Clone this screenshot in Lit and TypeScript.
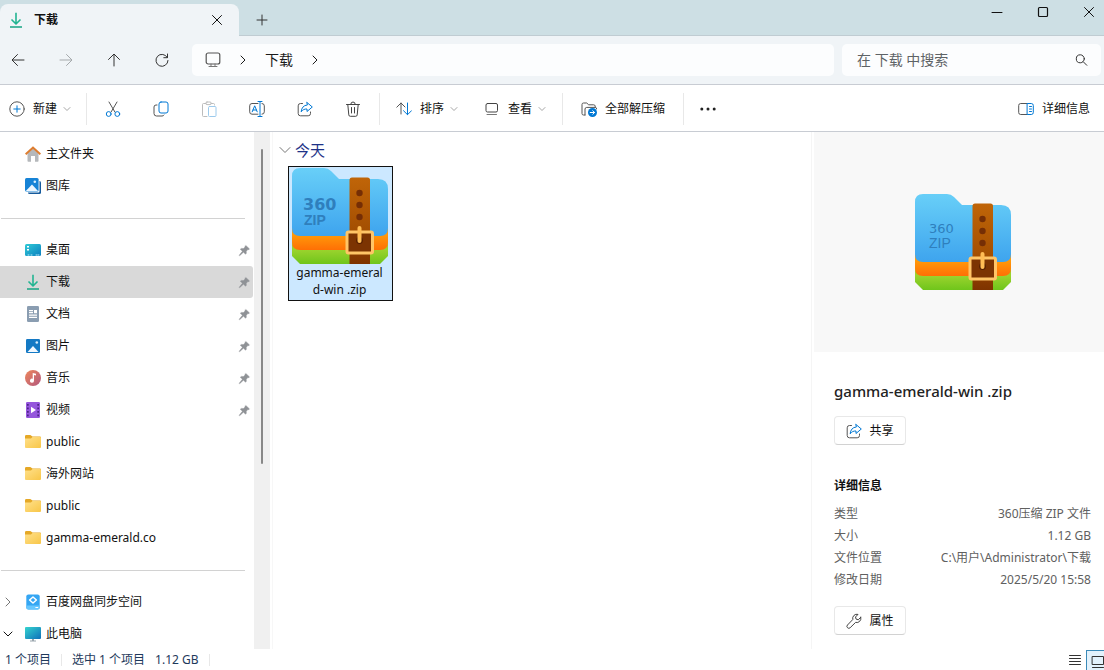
import { LitElement, html, svg, css, nothing, TemplateResult } from "lit";
import { customElement, property } from "lit/decorators.js";
import { classMap } from "lit/directives/class-map.js";

const glyph = (body: unknown, size = 16) =>
  html`<svg width=${size} height=${size} viewBox="0 0 16 16" fill="none" stroke="currentColor" stroke-linecap="round" stroke-linejoin="round" aria-hidden="true">${body}</svg>`;

const ICONS: Record<string, unknown> = {
  close: svg`<path d="M3.500 3.500l9 9M12.500 3.500l-9 9"/>`,
  plus: svg`<path d="M8 3v10M3 8h10"/>`,
  back: svg`<path d="M14 8H2.500M7.500 2.500L2 8l5.500 5.500"/>`,
  forward: svg`<path d="M2 8h11.500M8.500 2.500L14 8l-5.500 5.500"/>`,
  up: svg`<path d="M8 14V2.500M2.500 7.500L8 2l5.500 5.500"/>`,
  refresh: svg`<path d="M13.300 5.500A6 6 0 1 0 14 8.500M13.500 2v3.700H9.800"/>`,
  monitor: svg`<rect x="1.200" y="1" width="13.600" height="11" rx="2" stroke="#555" stroke-width="1.200"/><path d="M6 12v2.500M10 12v2.500M4 14.500h8" stroke="#777"/>`,
  chevronRight: svg`<path d="M6 4l4 4-4 4"/>`,
  chevronDown: svg`<path d="M4 6l4 4 4-4"/>`,
  collapse: svg`<path d="M3 5.500l5 5 5-5"/>`,
  search: svg`<circle cx="7.300" cy="6.800" r="4"/><path d="M10.300 9.800L13.800 13.300"/>`,
  create: svg`<circle cx="8" cy="8" r="7.200" stroke="#555"/><path d="M8 4.800v6.400M4.800 8h6.400" stroke="#0078d4"/>`,
  cut: svg`<path d="M4 1l5.900 10M12 1L6.100 11" stroke="#555"/><circle cx="3.700" cy="13" r="2.400" stroke="#0078d4"/><circle cx="12.300" cy="13" r="2.400" stroke="#0078d4"/>`,
  copy: svg`<rect x="6" y="1" width="9" height="11" rx="2" stroke="#0078d4"/><path d="M4 4H3a2 2 0 0 0-2 2v6.500A2.500 2.500 0 0 0 3.500 15H9a2 2 0 0 0 2-1" stroke="#555"/>`,
  paste: svg`<path d="M5 2.500H2.500a1 1 0 0 0-1 1v11a1 1 0 0 0 1 1H6M10 2.500h2.500a1 1 0 0 1 1 1V4" stroke="#bcbcbc"/><rect x="4.800" y="1" width="5.400" height="2.600" rx="1.200" stroke="#bcbcbc"/><rect x="7.500" y="5.500" width="7.500" height="10" rx="1" stroke="#9ccaec"/>`,
  rename: svg`<path d="M9 2.500H3a2.300 2.300 0 0 0-2.300 2.300v6A2.300 2.300 0 0 0 3 13.200h6M13 2.500a2.300 2.300 0 0 1 2.300 2.300v6a2.300 2.300 0 0 1-2.300 2.400" stroke="#555"/><path d="M9 .5h4M9 15.500h4M11 .5v15M3.200 10.800L5.700 4.800l2.500 6M4 9h3.400" stroke="#0078d4"/>`,
  share: svg`<path d="M5.500 2.500H3.500A2.300 2.300 0 0 0 1.200 4.800v7.700a2.300 2.300 0 0 0 2.300 2.300h7.700a2.300 2.300 0 0 0 2.300-2.300V11" stroke="#555"/><path d="M10 1.500L15.300 6 10 10.500V8C7.500 7.900 5.800 8.600 4.200 10.800 4.400 7 6.500 4.300 10 4z" stroke="#0078d4"/>`,
  trash: svg`<path d="M1.500 3.500h13M2.800 3.500l1 10.400a1.500 1.500 0 0 0 1.500 1.400h5.400a1.500 1.500 0 0 0 1.500-1.400l1-10.400M5.800 3.200a2.200 2.200 0 0 1 4.400 0M6.500 6.500v5.500M9.500 6.500v5.500" stroke="#444"/>`,
  sort: svg`<path d="M5 13V2M.8 6.200L5 2l4 4" stroke="#555"/><path d="M11.500 2v11.500M7.500 9.700l4 4 4-4" stroke="#0078d4"/>`,
  view: svg`<rect x="2" y="2.500" width="11.500" height="8.500" rx="1.500" stroke="#444"/><path d="M3 13.500h9.500" stroke="#777"/>`,
  extract: svg`<path d="M4 14H2.500A1.500 1.500 0 0 1 1 12.500v-9A1.500 1.500 0 0 1 2.500 2h3.200l2 1.800h5A1.500 1.500 0 0 1 14.200 5v1M4 14V8a1.800 1.800 0 0 1 1.700-1.600h8.500a1.500 1.500 0 0 1 1.500 1.500" stroke="#555"/><circle cx="11.500" cy="11.500" r="4.500" fill="#0078d4" stroke="none"/><path d="M9.200 11.500h4.300M11.800 9.700l1.800 1.800-1.800 1.800" stroke="#fff"/>`,
  more: svg`<g fill="#222" stroke="none"><circle cx="1.800" cy="8" r="1.500"/><circle cx="8" cy="8" r="1.500"/><circle cx="14.200" cy="8" r="1.500"/></g>`,
  details: svg`<path d="M9 2.500H2.700A2 2 0 0 0 .7 4.500v7a2 2 0 0 0 2 2H9" stroke="#555"/><path d="M9.500 2.500h3.800a2 2 0 0 1 2 2v7a2 2 0 0 1-2 2H9.500zM11.500 5.500h2M11.500 8h2M11.500 10.500h2" stroke="#0078d4"/>`,
  minimize: svg`<path d="M3 8.500h10" stroke="#111"/>`,
  maximize: svg`<rect x="3.500" y="3.500" width="9" height="9" rx="1" stroke="#111" stroke-width="1.200"/>`,
  wrench: svg`<path d="M14.800 4.300l-2.600 2.500-2.100-.7-.6-2.100 2.500-2.600A4.200 4.200 0 0 0 6.800 6.500L1.500 12a1.900 1.900 0 0 0 2.700 2.700l5.400-5.300a4.200 4.200 0 0 0 5.200-5.100z" stroke="#444"/>`,
  list: svg`<path d="M2.500 3.500h11M2.500 6.500h11M2.500 9.500h11M2.500 12.500h11" stroke="#333"/>`,
  tiles: svg`<path d="M2.500 3.500h11v8h-11zM2.500 14.500h11" stroke="#333"/>`,
  pin: svg`<path d="M10 2l4.200 4-1 1-1-.2-2 2.200.1 2.500-1 1.100-2.600-2.500L2 14.500l-.6-.6 4-4.900-2.600-2.600L4 5.400l2.700.1 2-1.800-.1-1z" fill="#8f9296" stroke="#8f9296" stroke-width=".5"/>`,
  download: svg`<g stroke-linecap="butt" stroke="#22b491" stroke-width="1.600"><path d="M8 .8v11M3.500 7.500L8 12l4.500-4.500"/><path d="M2 15h12" stroke="#23a98a"/></g>`,
  home: svg`<g stroke="none"><path d="M2.500 7.500L8 2.500l5.500 5v7.500a.8.800 0 0 1-.8.800H10V10H6v5.800H3.300a.8.800 0 0 1-.8-.8z" fill="#b5b8bb"/><path d="M8 .3L0 7.600l1.300 1.400L8 3l6.700 6L16 7.600z" fill="#dd7d30"/></g>`,
  gallery: svg`<g stroke="none"><rect x="3" y="3" width="13" height="13" rx="1.500" fill="#155a9c"/><rect x="2" y="2" width="12.500" height="12.500" rx="1" fill="#fff"/><rect width="13.600" height="13.600" rx="1.500" fill="#1783d6"/><path d="M.8 13L7 6.500l6 6.500z" fill="#eef7ff"/><circle cx="9.800" cy="3.700" r="1.300" fill="#d8efff"/></g>`,
  desktop: svg`<g stroke="none"><rect y="2" width="16" height="12" rx="1.500" fill="url(#deskFill)"/><path d="M2 4h2v1.500H2zM2 7h2v1.500H2z" fill="#fff"/><path d="M3 13h1M6 13h1M11 13h1M13 13h1" stroke="#b9ecfa"/></g><defs><linearGradient id="deskFill" x2="1" y2="1"><stop stop-color="#31cbd6"/><stop offset="1" stop-color="#0b7fc0"/></linearGradient></defs>`,
  document: svg`<g stroke="none"><rect x="2" width="12" height="16" rx="1.300" fill="#8a9db1"/><path d="M4 4h4v1.200H4zM4 6h4v1.200H4zM9 4h3v3.200H9zM4 8.500h8v1.200H4zM4 10.800h8V12H4z" fill="#fff"/></g>`,
  picture: svg`<g stroke="none"><rect x="1" y="1" width="14" height="14" rx="1.300" fill="#1479c4"/><path d="M2.500 14L8 8l5.500 6z" fill="#f1f8ff"/><circle cx="11.800" cy="4.500" r="1.300" fill="#d7edfd"/></g>`,
  music: svg`<g stroke="none"><circle cx="8" cy="8" r="8" fill="url(#musicFill)"/><path d="M7.700 3l3.300.8v1.700l-2-.4v5.400a2 2 0 1 1-1.300-1.700z" fill="#fff"/></g><defs><linearGradient id="musicFill" x2="1" y2="1"><stop stop-color="#ee875b"/><stop offset="1" stop-color="#b2577f"/></linearGradient></defs>`,
  video: svg`<g stroke="none"><rect x="1" width="14" height="16" rx="1.300" fill="#9556dc"/><path d="M2 2h1.700v1.700H2zM2 5.500h1.700v1.700H2zM2 9h1.700v1.700H2zM2 12.500h1.700v1.700H2zM12.300 2H14v1.700h-1.700zM12.300 5.500H14v1.700h-1.700zM12.300 9H14v1.700h-1.700zM12.300 12.500H14v1.700h-1.700z" fill="#4c2387"/><path d="M6 4.800L11 8l-5 3.200z" fill="#fff"/></g>`,
  folder: svg`<g stroke="none"><path d="M0 2.300A1.300 1.300 0 0 1 1.300 1h4l2.200 1.600H15a1 1 0 0 1 1 1V8H0z" fill="#e5a826"/><path d="M0 4.600h6l1.500-1.500H15a1 1 0 0 1 1 1V13a1 1 0 0 1-1 1H1a1 1 0 0 1-1-1z" fill="url(#folderFill)"/></g><defs><linearGradient id="folderFill" x2="1" y2="1"><stop stop-color="#ffe08a"/><stop offset="1" stop-color="#f8c648"/></linearGradient></defs>`,
  cloud: svg`<g stroke="none"><rect x="1.300" y=".5" width="13.400" height="15" rx="2" fill="#35a6f3"/><path d="M1.300 11.500h13.400v2a2 2 0 0 1-2 2H3.300a2 2 0 0 1-2-2z" fill="#67c7ff"/><path d="M10.800 13.500h2" stroke="#fff"/></g><path d="M8 3l3.400 3L8 9 4.600 6z" stroke="#fff" stroke-width="1.500"/><circle cx="8" cy="6" r=".8" fill="#35a6f3" stroke="none"/>`,
  computer: svg`<g stroke="none"><path d="M5 14.500h6v1H5zM7 12h2v3H7z" fill="#9aa5ad"/><rect y="1" width="16" height="12" rx="1" fill="url(#pcFill)"/></g><defs><linearGradient id="pcFill" x2="1" y2="1"><stop stop-color="#35d4cf"/><stop offset="1" stop-color="#0f6fba"/></linearGradient></defs>`,
};

const icon = (name: string, size = 16) => glyph(ICONS[name], size);

@customElement("archive-art")
class ArchiveArt extends LitElement {
  @property({ type: Boolean }) bold = false;

  static styles = css`
    :host { display: block; width: 96px; height: 96px; }
    svg { display: block; }
    .num { font: 13px "DejaVu Sans", sans-serif; }
    .zip { font: 14px "Liberation Sans", sans-serif; }
    .bold .num { font: bold 16px "DejaVu Sans", sans-serif; }
    .bold .zip { font: bold 14px "Liberation Sans", sans-serif; }
  `;

  render() {
    return html`<svg class=${this.bold ? "bold" : ""} width="96" height="96" viewBox="0 0 96 96" role="img" aria-label="ZIP">
      <defs>
        <linearGradient id="blue" x2="0" y2="1"><stop stop-color="#68cff8"/><stop offset="1" stop-color="#3ea4ee"/></linearGradient>
        <linearGradient id="orange" x2="0" y2="1"><stop offset=".5" stop-color="#ff9b0a"/><stop offset="1" stop-color="#ff6f05"/></linearGradient>
        <linearGradient id="green" x2="0" y2="1"><stop offset=".6" stop-color="#9bd32e"/><stop offset="1" stop-color="#6fc51b"/></linearGradient>
        <linearGradient id="belt" x2="0" y2="1"><stop stop-color="#c06508"/><stop offset=".6" stop-color="#a44f02"/><stop offset="1" stop-color="#7e3300"/></linearGradient>
      </defs>
      <path d="M0 60h96v28l-8 8H8l-8-8z" fill="url(#green)"/>
      <path d="M0 50h96v24q0 8-8 8H8q-8 0-8-8z" fill="url(#orange)"/>
      <path d="M0 8Q0 0 8 0h24q4 0 7 3l8 8h39q10 0 10 10v39q0 8-8 8H8q-8 0-8-8z" fill="url(#blue)"/>
      <text fill="#2f7fbd"><tspan class="num" x=${this.bold ? 11 : 14} y=${this.bold ? 42 : 39}>360</tspan><tspan class="zip" x=${this.bold ? 12 : 14} y=${this.bold ? 57 : 54}>ZIP</tspan></text>
      <path d="M57.500 12q0-2.500 2.500-2.500h15.500q2.500 0 2.500 2.500v84H57.500z" fill="url(#belt)"/>
      <g fill="#752e05"><circle cx="67.500" cy="25" r="3.200"/><circle cx="67.500" cy="37" r="3.200"/><circle cx="67.500" cy="49" r="3.200"/></g>
      <rect x="55" y="64" width="25.500" height="21" rx="1.500" fill="#7c3402" stroke="#ffc567" stroke-width="3"/>
      <circle cx="67.500" cy="72.500" r="3.400" fill="#551f00"/>
      <path d="M67.500 60v13" stroke="#ffbd55" stroke-width="4" stroke-linecap="round"/>
    </svg>`;
  }
}

interface Place { icon: string; label: string; pinned?: boolean; current?: boolean; toggle?: string; }

const GROUPS: Place[][] = [
  [{ icon: "home", label: "主文件夹" }, { icon: "gallery", label: "图库" }],
  [
    { icon: "desktop", label: "桌面", pinned: true },
    { icon: "download", label: "下载", pinned: true, current: true },
    { icon: "document", label: "文档", pinned: true },
    { icon: "picture", label: "图片", pinned: true },
    { icon: "music", label: "音乐", pinned: true },
    { icon: "video", label: "视频", pinned: true },
    { icon: "folder", label: "public" },
    { icon: "folder", label: "海外网站" },
    { icon: "folder", label: "public" },
    { icon: "folder", label: "gamma-emerald.co" },
  ],
  [
    { icon: "cloud", label: "百度网盘同步空间", toggle: "chevronRight" },
    { icon: "computer", label: "此电脑", toggle: "chevronDown" },
  ],
];

const FACTS = [
  ["类型", "360压缩 ZIP 文件"],
  ["大小", "1.12 GB"],
  ["文件位置", "C:\\用户\\Administrator\\下载"],
  ["修改日期", "2025/5/20 15:58"],
];

@customElement("app-root")
class AppRoot extends LitElement {
  static styles = css`
    :host {
      display: flex; flex-direction: column; height: 100vh; overflow: hidden;
      font: 12px/16px "Noto Sans", "Noto Sans CJK SC", sans-serif; color: #111; background: #fff;
    }
    * { box-sizing: border-box; }
    svg { display: block; flex: none; }
    button { font: inherit; color: inherit; border: 0; padding: 0; background: none; display: flex; align-items: center; justify-content: center; flex: none; white-space: nowrap; }
    a { color: inherit; text-decoration: none; }

    .titlebar { display: flex; height: 36px; flex: none; background: #cddfe4; box-shadow: inset 0 -1px #c0ccd2; }
    .tab { display: flex; align-items: center; width: 239px; margin-top: 4px; padding: 0 14px 0 8px; gap: 10px; background: #f0f4f7; border-radius: 8px 8px 0 0; }
    .tab-name { flex: 1; font-weight: 600; }
    .new-tab { width: 46px; padding-top: 4px; color: #333; }
    .window-keys { display: flex; margin-left: auto; height: 23px; gap: 30px; padding-right: 7px; }

    .nav { display: flex; align-items: center; height: 49px; flex: none; padding: 0 3px 0 2px; background: #f0f4f7; border-bottom: 1px solid #c8ccd3; color: #333; }
    .arrows { display: flex; gap: 16px; margin-right: 14px; }
    .arrows button { width: 32px; height: 32px; }
    .arrows .off { color: #a5a9ac; }
    .path { display: flex; flex: 1; align-items: center; height: 32px; padding-left: 13px; gap: 14px; background: #fcfdfe; border-radius: 5px; font-size: 14px; color: #1a1a1a; }
    .find { display: flex; align-items: center; width: 259px; height: 32px; margin-left: 8px; padding: 0 12px 0 15px; background: #fcfdfe; border-radius: 5px; }
    .find input { flex: 1; min-width: 0; padding: 0; border: 0; outline: 0; background: none; font: inherit; font-size: 14px; }
    .find input::placeholder { color: #5e6366; opacity: 1; }

    .tools { display: flex; align-items: center; height: 47px; flex: none; padding: 2px 14px 0 9px; border-bottom: 1px solid #c8ccd3; }
    .tools .text { gap: 8px; }
    .tools .chevron { color: #888; margin-left: -4px; }
    .rule { width: 1px; height: 32px; background: #e8e8e8; flex: none; }
    .edit { display: flex; padding: 0 2px; }
    .edit button { width: 48px; height: 32px; }
    .pair { display: flex; gap: 24px; padding: 0 14px 0 16px; }
    .lead { padding-right: 13px; }
    .extract { padding: 0 18px; }
    .more { padding: 0 16px; }
    .last { margin-left: auto; }

    .body { display: flex; flex: 1; min-height: 0; }
    .side { width: 254px; flex: none; padding-top: 6px; overflow: hidden; }
    .place { display: flex; align-items: center; height: 32px; padding: 0 3px 0 0; }
    .place .toggle { width: 16px; margin-right: 9px; color: #777; }
    .place .open { color: #111; }
    .place .name { flex: 1; margin-left: 5px; }
    .place.current { background: #d9d9d9; border-radius: 0 3px 3px 0; margin-right: 1px; padding-right: 2px; }
    .break { height: 1px; border: 0; margin: 16px 9px 15px 1px; background: #d2d2d2; }
    .track { width: 16px; flex: none; background: #f0f0f0; padding: 17px 7px 0; }
    .thumb { width: 2px; height: 63%; background: #888; border-radius: 1px; }

    .files { flex: 1; min-width: 0; padding: 7px 0 0 4px; margin-left: 2px; border-left: 1px solid #f7f7f7; }
    .group { display: flex; align-items: center; gap: 2px; margin: 0; height: 22px; font-size: 15px; font-weight: 400; color: #1e3287; }
    .group svg { color: #777; }
    .file { width: 105px; height: 135px; margin: 5px 0 0 11px; padding: 1px 2px 0 0; flex-direction: column; justify-content: flex-start; border: 1px solid #111; background: #cce8ff; line-height: 17px; white-space: normal; }
    .file span { width: 88px; word-break: break-all; text-align: center; }

    .info { width: 293px; flex: none; border-left: 1px solid #f5f5f5; padding-left: 2px; }
    .preview { display: flex; align-items: center; justify-content: center; height: 220px; padding-left: 8px; background: #f8f8f8; }
    .sheet { padding: 29px 13px 0 20px; }
    .sheet h2 { margin: 0; font-size: 15px; line-height: 20px; font-weight: 500; color: #222; }
    .card { width: 72px; height: 29px; margin-top: 15px; gap: 7px; border: 1px solid #e8e8e8; border-bottom-color: #d2d2d2; border-radius: 4px; }
    .sheet h3 { margin: 33px 0 9px; font-size: 12px; line-height: 16px; font-weight: 700; }
    .facts { margin: 0 0 15px; color: #606060; line-height: 22px; }
    .facts div { display: flex; justify-content: space-between; }
    .facts dd { margin: 0; }

    .status { display: flex; align-items: center; height: 21px; flex: none; padding: 1px 0 0 5px; color: #1e395b; }
    .status .rule { height: 12px; margin: 0 10px; }
    .status .size { margin-left: 10px; }
    .modes { display: flex; margin-left: auto; overflow: hidden; width: 37px; height: 20px; gap: 3px; }
    .modes .on { width: 24px; height: 24px; background: #e3f2fc; border: 1px solid #3b8ab8; align-items: flex-start; padding-top: 2px; }
  `;

  private place(p: Place): TemplateResult {
    return html`<a href="#" class=${classMap({ place: true, current: !!p.current })}>
      <span class=${classMap({ toggle: true, open: p.toggle === "chevronDown" })}>${p.toggle ? icon(p.toggle) : nothing}</span>
      ${icon(p.icon)}<span class="name">${p.label}</span>${p.pinned ? icon("pin", 13) : nothing}
    </a>`;
  }

  render() {
    return html`
      <header class="titlebar">
        <div class="tab">${icon("download")}<span class="tab-name">下载</span><button aria-label="关闭标签页">${icon("close")}</button></div>
        <button class="new-tab" aria-label="新建标签页">${icon("plus")}</button>
        <div class="window-keys">
          <button aria-label="最小化">${icon("minimize")}</button>
          <button aria-label="最大化">${icon("maximize")}</button>
          <button aria-label="关闭">${icon("close")}</button>
        </div>
      </header>
      <nav class="nav">
        <div class="arrows">
          <button aria-label="后退">${icon("back")}</button>
          <button class="off" aria-label="前进">${icon("forward")}</button>
          <button aria-label="向上">${icon("up")}</button>
          <button aria-label="刷新">${icon("refresh")}</button>
        </div>
        <div class="path">${icon("monitor")}${icon("chevronRight")}<a href="#">下载</a>${icon("chevronRight")}</div>
        <label class="find"><input type="text" aria-label="搜索" placeholder="在 下载 中搜索" />${icon("search")}</label>
      </nav>
      <div class="tools">
        <button class="text lead">${icon("create")}新建<span class="chevron">${icon("chevronDown", 12)}</span></button>
        <span class="rule"></span>
        <div class="edit">
          <button aria-label="剪切">${icon("cut")}</button>
          <button aria-label="复制">${icon("copy")}</button>
          <button aria-label="粘贴">${icon("paste")}</button>
          <button aria-label="重命名">${icon("rename")}</button>
          <button aria-label="共享">${icon("share")}</button>
          <button aria-label="删除">${icon("trash")}</button>
        </div>
        <span class="rule"></span>
        <div class="pair">
          <button class="text">${icon("sort")}排序<span class="chevron">${icon("chevronDown", 12)}</span></button>
          <button class="text">${icon("view")}查看<span class="chevron">${icon("chevronDown", 12)}</span></button>
        </div>
        <span class="rule"></span>
        <button class="text extract">${icon("extract")}全部解压缩</button>
        <span class="rule"></span>
        <button class="more" aria-label="更多">${icon("more")}</button>
        <button class="text last">${icon("details")}详细信息</button>
      </div>
      <div class="body">
        <nav class="side">
          ${GROUPS.map((group, i) => html`${i ? html`<hr class="break" />` : nothing}${group.map((p) => this.place(p))}`)}
        </nav>
        <div class="track"><div class="thumb"></div></div>
        <main class="files">
          <h1 class="group">${icon("collapse")}今天</h1>
          <button class="file"><archive-art bold></archive-art><span>gamma-emerald-win .zip</span></button>
        </main>
        <aside class="info">
          <div class="preview"><archive-art></archive-art></div>
          <div class="sheet">
            <h2>gamma-emerald-win .zip</h2>
            <button class="card">${icon("share")}共享</button>
            <h3>详细信息</h3>
            <dl class="facts">${FACTS.map(([k, v]) => html`<div><dt>${k}</dt><dd>${v}</dd></div>`)}</dl>
            <button class="card">${icon("wrench")}属性</button>
          </div>
        </aside>
      </div>
      <footer class="status">
        <span>1 个项目</span><span class="rule"></span><span>选中 1 个项目</span><span class="size">1.12 GB</span><span class="rule"></span>
        <div class="modes"><button aria-label="列表">${icon("list")}</button><button class="on" aria-label="大图标">${icon("tiles")}</button></div>
      </footer>
    `;
  }
}
